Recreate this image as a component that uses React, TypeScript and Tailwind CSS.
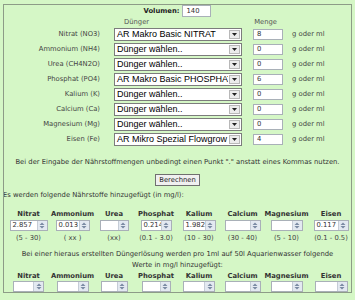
const rows = [
  { label: "Nitrat (NO3)", duenger: "AR Makro Basic NITRAT", menge: "8" },
  { label: "Ammonium (NH4)", duenger: "Dünger wählen..", menge: "0" },
  { label: "Urea (CH4N2O)", duenger: "Dünger wählen..", menge: "0" },
  { label: "Phosphat (PO4)", duenger: "AR Makro Basic PHOSPHAT", menge: "6" },
  { label: "Kalium (K)", duenger: "Dünger wählen..", menge: "0" },
  { label: "Calcium (Ca)", duenger: "Dünger wählen..", menge: "0" },
  { label: "Magnesium (Mg)", duenger: "Dünger wählen..", menge: "0" },
  { label: "Eisen (Fe)", duenger: "AR Mikro Spezial Flowgrow", menge: "4" },
];

const naehrstoffe = [
  { name: "Nitrat", wert: "2.857", bereich: "(5 - 30)", w: 38, w2: 31 },
  { name: "Ammonium", wert: "0.013", bereich: "( xx )", w: 34, w2: 32 },
  { name: "Urea", wert: "", bereich: "(xx)", w: 29, w2: 27 },
  { name: "Phosphat", wert: "0.214", bereich: "(0.1 - 3.0)", w: 31, w2: 29 },
  { name: "Kalium", wert: "1.982", bereich: "(10 - 30)", w: 33, w2: 32 },
  { name: "Calcium", wert: "", bereich: "(30 - 40)", w: 36, w2: 36 },
  { name: "Magnesium", wert: "", bereich: "(5 - 10)", w: 32, w2: 32 },
  { name: "Eisen", wert: "0.117", bereich: "(0.1 - 0.5)", w: 35, w2: 33 },
];

function SpinInput({ value, width }: { value: string; width: number }) {
  return (
    <div
      className="flex h-[11px] items-stretch border border-[#a9b0b8] bg-white"
      style={{ width }}
    >
      <div className="flex-1 overflow-hidden whitespace-nowrap pl-[2px] text-[6.8px] leading-[9px] text-[#333]">
        {value}
      </div>
      <div className="flex w-[10px] items-center justify-center border-l border-[#c5ccd6] bg-[#e3e9f1]">
        <svg width="6" height="7" viewBox="0 0 6 7">
          <path d="M3 0.5 L5.5 3 H0.5 Z M0.5 4 H5.5 L3 6.5 Z" fill="#7a8aa3" />
        </svg>
      </div>
    </div>
  );
}

function Select({ text }: { text: string }) {
  return (
    <div className="flex h-[13px] w-[128px] items-stretch border border-[#7c7c7c] bg-white">
      <div className="flex-1 overflow-hidden whitespace-nowrap pl-[2px] font-['Liberation_Sans',sans-serif] text-[9px] leading-[11px] text-black">
        {text}
      </div>
      <div className="m-[1px] flex w-[11px] items-center justify-center border border-[#b8b8b8] bg-[#ececec]">
        <svg width="5" height="3" viewBox="0 0 5 3">
          <path d="M0 0 H5 L2.5 3 Z" fill="#222" />
        </svg>
      </div>
    </div>
  );
}

export default function App() {
  return (
    <div className="h-[300px] w-[355px] overflow-hidden bg-[#d5f7c6] pt-[4px] pl-[3px] font-['DejaVu_Sans',Verdana,sans-serif] text-[6.8px] text-[#333]">
      <div className="h-[289px] w-[349px] overflow-hidden border border-[#8d9c87]">
        <div className="flex items-center justify-center gap-[3px]">
          <span className="font-bold text-[#222]">Volumen:</span>
          <div className="flex h-[12px] w-[29px] items-center border border-[#a9b0b8] bg-white pl-[3px]">
            140
          </div>
        </div>

        <div className="mt-[1px] flex h-[9px] items-center text-[#555]">
          <span className="ml-[120px]">Dünger</span>
          <span className="ml-[105px]">Menge</span>
        </div>

        <div className="mt-[1px] flex flex-col gap-[2px]">
          {rows.map((row) => (
            <div key={row.label} className="flex h-[13px] items-center">
              <div className="w-[98px] pr-[2px] text-right whitespace-nowrap text-[#444]">{row.label}</div>
              <div className="ml-[12px]">
                <Select text={row.duenger} />
              </div>
              <div className="ml-[11px] flex h-[11px] w-[30px] items-center border border-[#a9b0b8] bg-white pl-[3px]">
                {row.menge}
              </div>
              <span className="ml-[9px] text-[#444]">g oder ml</span>
            </div>
          ))}
        </div>

        <p className="mt-[11px] whitespace-nowrap text-center text-[#333]">
          Bei der Eingabe der Nährstoffmengen unbedingt einen Punkt "." anstatt eines Kommas nutzen.
        </p>

        <div className="mt-[7px] flex justify-center">
          <button className="h-[12px] border border-[#707070] bg-[#f0f0f0] px-[3px] text-[6.8px] leading-[10px] text-[#222]">
            Berechnen
          </button>
        </div>

        <p className="mt-[4px] -ml-[1px] text-[#333]">Es werden folgende Nährstoffe hinzugefügt (in mg/l):</p>

        <div className="mt-[9px] grid grid-cols-[45px_43px_40px_44px_42px_45px_43px_46px] justify-items-center pl-[2px]">
          {naehrstoffe.map((n) => (
            <div key={n.name} className="font-bold text-[#333]">{n.name}</div>
          ))}
          {naehrstoffe.map((n) => (
            <SpinInput key={n.name} value={n.wert} width={n.w} />
          ))}
          {naehrstoffe.map((n) => (
            <div key={n.name} className="mt-[2px] whitespace-nowrap text-[#444]">{n.bereich}</div>
          ))}
        </div>

        <p className="mt-[6px] text-center leading-[11px] text-[#333]">
          Bei einer hieraus erstellten Düngerlösung werden pro 1ml auf 50l Aquarienwasser folgende
          <br />
          Werte in mg/l hinzugefügt:
        </p>

        <div className="grid grid-cols-[45px_43px_40px_44px_42px_45px_43px_46px] justify-items-center pl-[2px]">
          {naehrstoffe.map((n) => (
            <div key={n.name} className="font-bold text-[#333]">{n.name}</div>
          ))}
          {naehrstoffe.map((n) => (
            <SpinInput key={n.name} value="" width={n.w2} />
          ))}
        </div>
      </div>
    </div>
  );
}
